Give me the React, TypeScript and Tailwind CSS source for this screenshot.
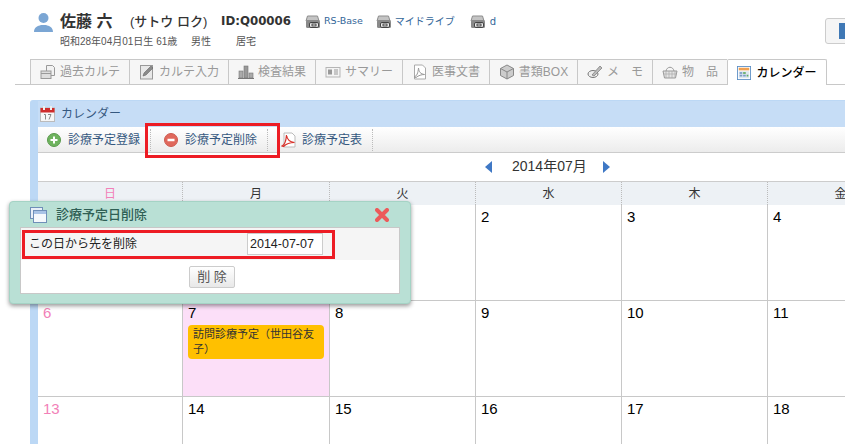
// カレンダー 診療予定日削除
import React from 'react';

const FONT = "font-['Liberation_Sans','Noto_Sans_CJK_JP',sans-serif]";

const Drive = () => (
  <svg width="16" height="16" viewBox="0 0 16 16" className="shrink-0">
    <path d="M2.500 2h10l1.500 5H1z" fill="#c4c4c4" stroke="#8d8d8d" />
    <rect x="1" y="6" width="14" height="8" rx="1.500" fill="#8a8a8a" />
    <rect x="4.500" y="8.500" width="9" height="5" rx="1.500" fill="#eee" stroke="#444" />
    <rect x="7" y="10" width="4" height="2" fill="none" stroke="#444" />
  </svg>
);

const tabIcons: Record<string, React.ReactNode> = {
  karte: (
    <svg width="16" height="16" viewBox="0 0 16 16">
      <path d="M6.500 1.500h6l2 2v8h-8z" fill="#f2f2f2" stroke="#999" />
      <rect x="1" y="7" width="10" height="7.500" fill="#ddd" stroke="#999" />
      <path d="M1 9.500h10" stroke="#999" />
    </svg>
  ),
  input: (
    <svg width="16" height="16" viewBox="0 0 16 16">
      <rect x="1.500" y="1.500" width="12" height="13.500" fill="#e8e8e8" stroke="#999" />
      <path d="M4 12l1-3 7-7 2 2-7 7z" fill="#8a8a8a" stroke="#666" strokeWidth=".6" />
    </svg>
  ),
  chart: (
    <svg width="16" height="16" viewBox="0 0 16 16">
      <rect x="1" y="7" width="4" height="7" fill="#aaa" stroke="#777" strokeWidth=".6" />
      <rect x="6" y="2" width="4" height="12" fill="#999" stroke="#777" strokeWidth=".6" />
      <rect x="11" y="9" width="4" height="5" fill="#aaa" stroke="#777" strokeWidth=".6" />
      <path d="M0 14.500h16" stroke="#777" />
    </svg>
  ),
  summary: (
    <svg width="16" height="16" viewBox="0 0 16 16">
      <rect x="1" y="3.500" width="14" height="9.500" fill="#f4f4f4" stroke="#b5b5b5" />
      <rect x="3" y="5.500" width="4" height="5" fill="#999" />
      <path d="M9 6h4M9 8h4M9 10h4" stroke="#999" />
    </svg>
  ),
  pdf: (
    <svg width="16" height="16" viewBox="0 0 16 16">
      <path d="M2.500 1h8l3 3v11h-11z" fill="#fff" stroke="#aaa" />
      <path d="M2 13c3-1 4-4 4.500-9 .5 4 2 6 6 6.500-3 0-6 1-8.500 3z" fill="none" stroke="#999" />
    </svg>
  ),
  box: (
    <svg width="16" height="16" viewBox="0 0 16 16">
      <path d="M8 1l6.500 3.500v7L8 15l-6.500-3.500v-7z" fill="#ccc" stroke="#888" />
      <path d="M1.500 4.500L8 8l6.500-3.500M8 8v7" fill="none" stroke="#888" />
    </svg>
  ),
  memo: (
    <svg width="16" height="16" viewBox="0 0 16 16">
      <ellipse cx="6" cy="10" rx="5" ry="3.500" fill="#eee" stroke="#777" />
      <path d="M5 11L13 2l2 2-8 8z" fill="#bbb" stroke="#777" strokeWidth=".7" />
    </svg>
  ),
  basket: (
    <svg width="16" height="16" viewBox="0 0 16 16">
      <path d="M4 7c1-5 7-5 8 0" fill="none" stroke="#999" />
      <path d="M1 7h14l-1.500 7h-11z" fill="#e4e4e4" stroke="#999" />
      <path d="M4 7v7M7 7v7M10 7v7M13 7v7M1.500 10h13" stroke="#aaa" strokeWidth=".7" />
    </svg>
  ),
  calendar: (
    <svg width="14" height="14" viewBox="0 0 16 16">
      <rect x=".5" y=".5" width="15" height="15" fill="#fff" stroke="#5b8ec4" />
      <rect x="2" y="2" width="12" height="3" fill="#f0a050" />
      <path d="M2 6h12v8H2z" fill="#dde6f0" />
      <rect x="3" y="7" width="3" height="2" fill="#7a9cc4" />
      <rect x="7" y="7" width="3" height="2" fill="#63ad63" />
      <rect x="11" y="10" width="2" height="2" fill="#63ad63" />
      <rect x="3" y="10" width="3" height="2" fill="#7a9cc4" />
      <rect x="7" y="10" width="3" height="2" fill="#7a9cc4" />
    </svg>
  ),
};

const tabs = [
  { label: '過去カルテ', icon: 'karte', w: 'w-[99px]' },
  { label: 'カルテ入力', icon: 'input', w: 'w-[99px]' },
  { label: '検査結果', icon: 'chart', w: 'w-[87px]' },
  { label: 'サマリー', icon: 'summary', w: 'w-[87px]' },
  { label: '医事文書', icon: 'pdf', w: 'w-[87px]' },
  { label: '書類BOX', icon: 'box', w: 'w-[88px]' },
  { label: 'メ　モ', icon: 'memo', w: 'w-[75px]' },
  { label: '物　品', icon: 'basket', w: 'w-[75px]' },
];

const days = [
  { label: '日', color: 'text-[#f27fb8]', w: 'w-[145px]' },
  { label: '月', color: 'text-[#333]', w: 'w-[147px]' },
  { label: '火', color: 'text-[#333]', w: 'w-[146px]' },
  { label: '水', color: 'text-[#333]', w: 'w-[146px]' },
  { label: '木', color: 'text-[#333]', w: 'w-[146px]' },
  { label: '金', color: 'text-[#333]', w: 'w-[146px]' },
];

const rows = [
  { h: 'h-[96px]', nums: ['', '', '1', '2', '3', '4'] },
  { h: 'h-[96px]', nums: ['6', '7', '8', '9', '10', '11'] },
  { h: 'h-[96px]', nums: ['13', '14', '15', '16', '17', '18'] },
];

export default function App() {
  return (
    <div className={`relative h-[444px] w-[845px] overflow-hidden bg-white ${FONT}`}>
      {/* 患者ヘッダー */}
      <div className="flex h-[34px] items-center pl-[34px] pt-[9px]">
        <svg width="19" height="20" viewBox="0 0 19 20" className="mr-[7px]">
          <circle cx="9.500" cy="6" r="5" fill="#7ba6d4" />
          <path d="M0 20c0-5 4-6 7-7h5c3 1 7 2 7 7z" fill="#7ba6d4" />
        </svg>
        <span className="w-[70px] text-[16px] font-bold text-[#333]">佐藤 六</span>
        <span className="w-[91px] text-[13px] font-medium text-[#333]">(サトウ ロク)</span>
        <span className="mr-[14px] w-[70px] font-['DejaVu_Sans'] text-[11.8px] font-bold text-[#333]">ID:Q00006</span>
        <Drive />
        <span className="ml-[3px] mr-[13px] font-['DejaVu_Sans'] text-[9.500px] font-medium text-[#336699]">RS-Base</span>
        <Drive />
        <span className="ml-[3px] mr-[15px] text-[10px] text-[#336699]">マイドライブ</span>
        <Drive />
        <span className="ml-[4px] font-['DejaVu_Sans'] text-[10px] font-medium text-[#336699]">d</span>
      </div>
      <div className="absolute right-[-10px] top-[18px] flex h-[26px] w-[30px] items-center rounded-[3px] border border-[#ccc] bg-[#f5f5f5] pl-[13px]">
        <div className="h-[16px] w-[8px] bg-[#3f78b5]" />
      </div>
      <div className="flex h-[15px] pl-[60px] text-[10px] leading-[15px] text-[#555]">
        <span className="w-[131px]">昭和28年04月01日生 61歳</span>
        <span className="w-[45px]">男性</span>
        <span>居宅</span>
      </div>

      {/* タブ */}
      <div className="ml-[15px] mt-[10px] flex h-[26px] border-b border-[#c8c8c8] pl-[15px]">
        {tabs.map((t) => (
          <div
            key={t.label}
            className={`flex h-[25px] ${t.w} items-center justify-center gap-[4px] border-l border-t border-[#c8c8c8] bg-[#f6f6f6] text-[12px] text-[#999]`}
          >
            {tabIcons[t.icon]}
            <span>{t.label}</span>
          </div>
        ))}
        <div className="flex h-[26px] w-[100px] items-center justify-center gap-[5px] rounded-t-[2px] border-x border-t border-[#c8c8c8] bg-white text-[12px] font-medium text-black">
          {tabIcons.calendar}
          <span>カレンダー</span>
        </div>
      </div>

      {/* カレンダーパネル */}
      <div className="ml-[30px] mt-[15px] w-[1000px] rounded-tl-[3px] border-l-[8px] border-t border-[#bcd8f5] bg-[#c6ddf6]">
        <div className="-ml-[7px] flex h-[26px] items-center gap-[6px] pl-[9px] text-[12px] text-[#35587f]">
          <svg width="15" height="16" viewBox="0 0 15 16">
            <rect x=".5" y="2" width="14" height="13.500" fill="#f6f6f6" stroke="#bbb" />
            <rect x=".5" y="2" width="14" height="4.500" fill="#cf2b2b" />
            <rect x="3" y="0" width="2" height="4" fill="#eee" />
            <rect x="10" y="0" width="2" height="4" fill="#eee" />
            <path d="M4 8.500h1.500v5M8 8.500h3l-2 5" fill="none" stroke="#888" />
          </svg>
          <span>カレンダー</span>
        </div>
        <div className="bg-white">
          <div className="flex h-[26px] items-center border-b border-[#ccc] bg-gradient-to-b from-white to-[#ececec] text-[12px] text-[#35587f]">
            <div className="flex h-[26px] w-[112px] items-center gap-[7px] pl-[9px]">
              <svg width="14" height="14" viewBox="0 0 14 14">
                <circle cx="7" cy="7" r="6.500" fill="#6fb35f" stroke="#5a9a4c" />
                <path d="M7 3.500v7M3.500 7h7" stroke="#fff" strokeWidth="2" />
              </svg>
              <span className="whitespace-nowrap">診療予定登録</span>
            </div>
            <div className="flex h-[22px] w-[118px] items-center gap-[7px] border-x border-dotted border-[#bbb] pl-[13px]">
              <svg width="14" height="14" viewBox="0 0 14 14">
                <circle cx="7" cy="7" r="6.500" fill="#e0685c" stroke="#cc5b50" />
                <path d="M3.500 7h7" stroke="#fff" strokeWidth="2.500" />
              </svg>
              <span className="whitespace-nowrap">診療予定削除</span>
            </div>
            <div className="flex h-[22px] w-[105px] items-center gap-[5px] border-r border-dotted border-[#bbb] pl-[13px]">
              <svg width="16" height="16" viewBox="0 0 16 16">
                <path d="M3 1h8l3 3v11H3z" fill="#fff" stroke="#bbb" />
                <path d="M1 14c3-1 4-5 4.500-11 .5 4 3 7 8 7.500-4 0-8 1-11 4z" fill="none" stroke="#d8322b" strokeWidth="1.200" />
              </svg>
              <span className="whitespace-nowrap">診療予定表</span>
            </div>
          </div>

          <div className="flex h-[28px] w-[845px] items-center pb-[1px] text-[14px] text-[#333]">
            <div className="ml-[447px] h-0 w-0 border-y-[6px] border-r-[7px] border-y-transparent border-r-[#3f78c5]" />
            <span className="ml-[20px] w-[91px] whitespace-nowrap">2014年07月</span>
            <div className="h-0 w-0 border-y-[6px] border-l-[7px] border-y-transparent border-l-[#3f78c5]" />
          </div>

          <div className="flex h-[24px] border-t border-[#ccc] bg-[#edf1f5] text-[12px]">
            {days.map((d) => (
              <div key={d.label} className={`${d.w} ${d.color} flex items-center justify-center border-r border-dotted border-[#bbb]`}>
                {d.label}
              </div>
            ))}
          </div>

          {rows.map((r, i) => (
            <div key={i} className={`flex ${r.h} border-b border-[#c8c8c8]`}>
              {days.map((d, j) => {
                const today = r.nums[j] === '7';
                return (
                  <div
                    key={d.label}
                    className={`${d.w} border-r border-[#c8c8c8] px-[5px] py-[3px] text-[15px] leading-[18px] ${j === 0 ? 'text-[#f27fb8]' : 'text-black'} ${today ? 'bg-[#fcdff8]' : ''}`}
                  >
                    {r.nums[j]}
                    {today && (
                      <div className="mt-[3px] rounded-[4px] bg-[#ffc000] px-[5px] py-[2px] text-[11px] leading-[15px] text-[#333]">
                        訪問診療予定（世田谷友子）
                      </div>
                    )}
                  </div>
                );
              })}
            </div>
          ))}
        </div>
      </div>

      {/* 注釈の赤枠 */}
      <div className="absolute left-[145px] top-[123px] h-[35px] w-[135px] border-[3px] border-[#ed1c24]" />

      {/* 診療予定日削除ダイアログ */}
      <div className="absolute left-[9px] top-[201px] w-[402px] rounded-[4px] border border-[#a5d3c5] bg-[#b9e0d5] px-[10px] pb-[9px] shadow-[0_2px_4px_rgba(0,0,0,0.4)]">
        <div className="flex h-[25px] items-center pl-[10px] pr-[11px]">
          <svg width="17" height="16" viewBox="0 0 17 16" className="mr-[9px]">
            <rect x=".5" y=".5" width="12" height="11" fill="#e8eff8" stroke="#6f8fb8" />
            <rect x="3.500" y="3.500" width="13" height="12" fill="#f5f8fc" stroke="#6f8fb8" />
            <rect x="4" y="4" width="12" height="3" fill="#a9c3e6" />
          </svg>
          <span className="flex-1 text-[13px] font-medium text-[#2f5f55]">診療予定日削除</span>
          <svg width="14" height="14" viewBox="0 0 14 14">
            <path d="M2 2l10 10M12 2L2 12" stroke="#ec5a5a" strokeWidth="4" strokeLinecap="round" />
          </svg>
        </div>
        <div className="border border-[#c8c8c8] bg-white">
          <div className="flex h-[32px] items-center bg-[#f5f5f5] pl-[8px] text-[12px] text-[#222]">
            <span className="w-[218px]">この日から先を削除</span>
            <div className="flex h-[22px] w-[76px] items-center border border-[#ccc] bg-white pl-[2px] text-[12.500px]">2014-07-07</div>
          </div>
          <div className="flex h-[33px] items-center justify-center pl-[4px]">
            <div className="flex h-[22px] w-[46px] items-center justify-center rounded-[2px] border border-[#ccc] bg-gradient-to-b from-white to-[#e8e8e8] text-[13px] text-[#555]">
              削 除
            </div>
          </div>
        </div>
      </div>
      <div className="absolute left-[22px] top-[230px] h-[29px] w-[313px] border-[3px] border-[#ed1c24]" />
    </div>
  );
}
